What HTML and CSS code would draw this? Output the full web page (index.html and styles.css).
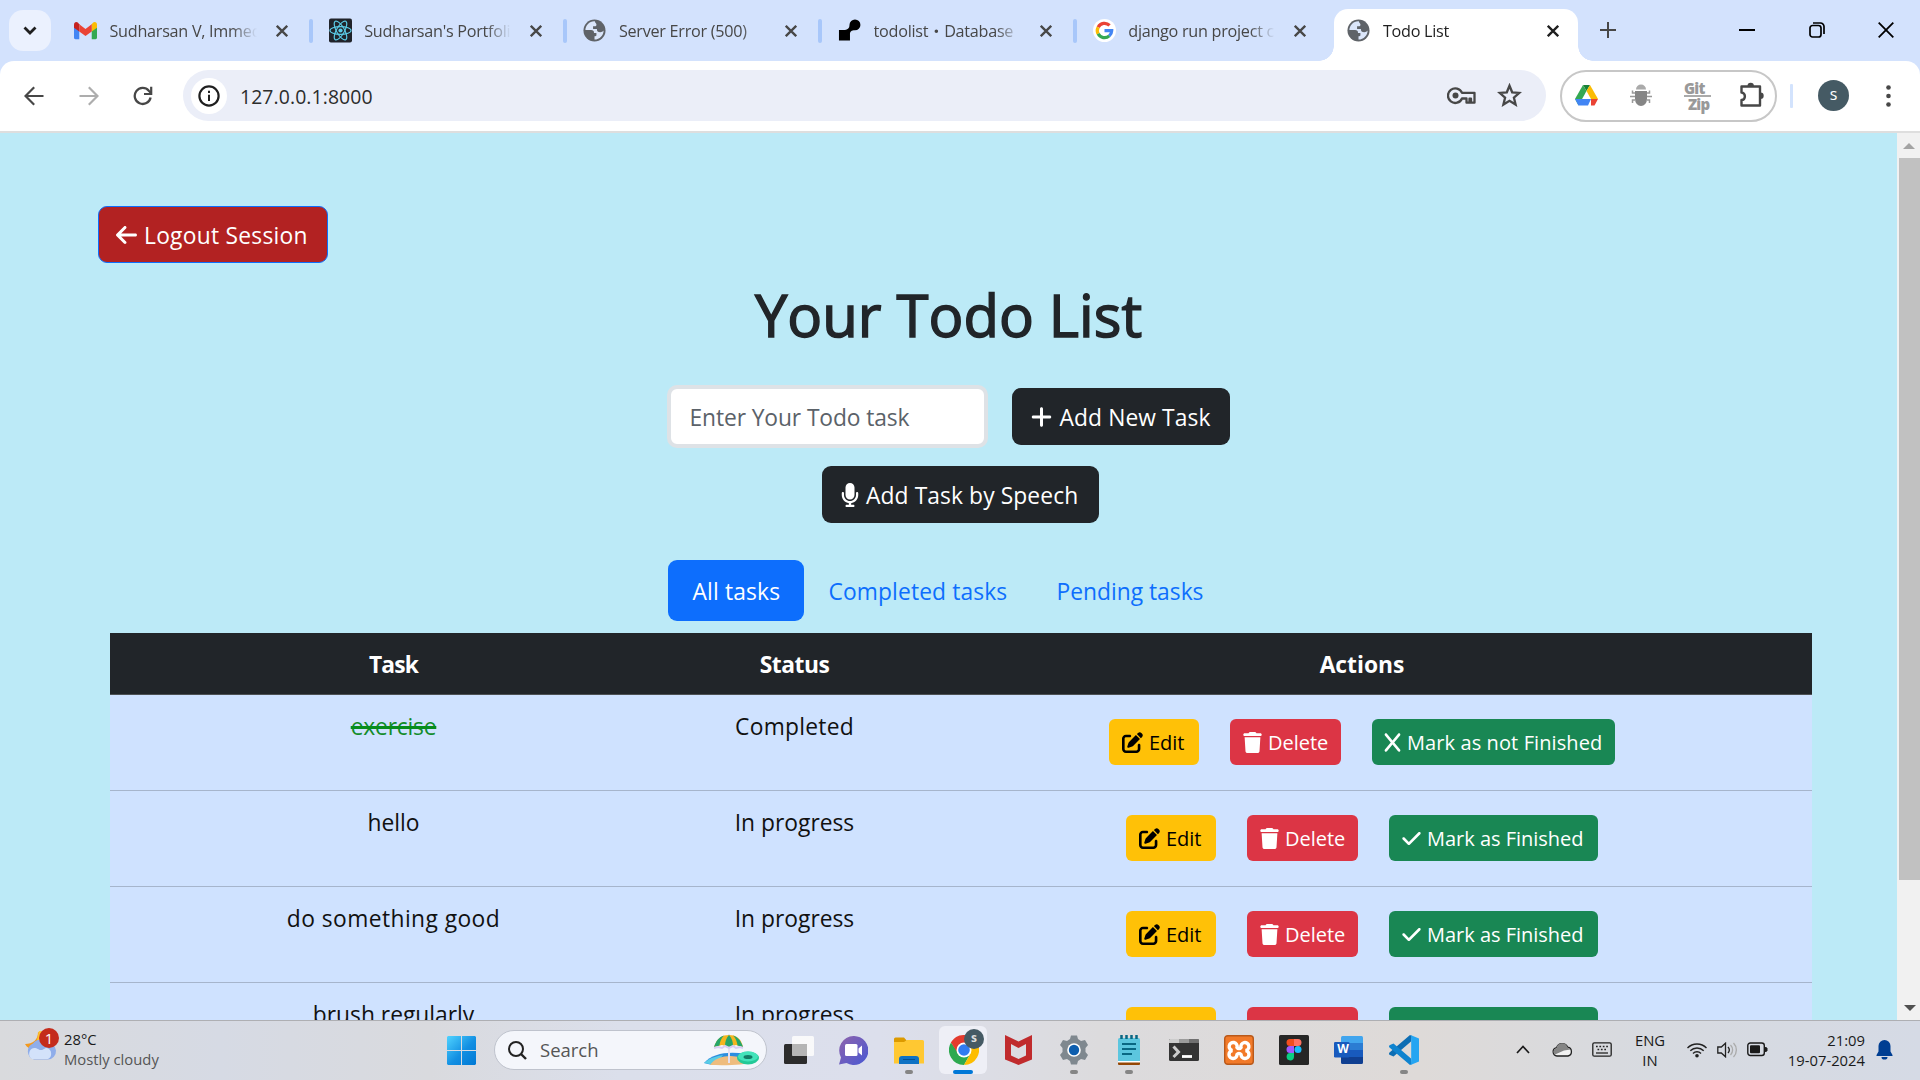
FILE: index.html
```html
<!DOCTYPE html>
<html lang="en">
<head>
<meta charset="utf-8">
<title>Todo List</title>
<link rel="stylesheet" href="styles.css">
</head>
<body>
<svg class="defs" aria-hidden="true">
  <symbol id="x" viewBox="0 0 12 12"><path d="M.8.8l10.400 10.400M11.200.8L.8 11.200" stroke="currentColor" stroke-width="2.300" fill="none"/></symbol>
  <symbol id="globe" viewBox="0 0 24 24"><circle cx="12" cy="12" r="11.500" fill="#5f6368"/><path d="M12.500 2.500C7 2 2.700 6.500 2.500 11.500h6c2 0 3 1 3 3h2.500v2.500c0 1-1 1-2 1v3.500c5.500 0 9.500-4.500 9.500-9.500-1 1-2 1.800-3.500 1.800-2.500 0-3.500-1-3.500-3.300h-4V7.500h2.500c1 0 1-1 1-2s-1.500-1.500-1.500-3z" fill="#dbe6fa"/></symbol>
  <symbol id="edit" viewBox="0 0 512 512"><path d="M471.600 21.700c-21.900-21.900-57.300-21.900-79.200 0L362.300 51.700l97.900 97.900 30.100-30.100c21.900-21.900 21.900-57.300 0-79.200L471.600 21.700zm-299.200 220c-6.100 6.100-10.800 13.600-13.500 21.900l-29.600 88.800c-2.900 8.600-.6 18.100 5.800 24.600s15.900 8.700 24.600 5.800l88.800-29.600c8.200-2.700 15.700-7.400 21.900-13.500L437.700 172.300 339.700 74.300 172.400 241.700zM96 64C43 64 0 107 0 160V416c0 53 43 96 96 96H352c53 0 96-43 96-96V320c0-17.700-14.300-32-32-32s-32 14.300-32 32v96c0 17.700-14.300 32-32 32H96c-17.700 0-32-14.300-32-32V160c0-17.700 14.300-32 32-32h96c17.700 0 32-14.300 32-32s-14.300-32-32-32H96z" fill="currentColor"/></symbol>
  <symbol id="trash" viewBox="0 0 448 512"><path d="M135.200 17.700L128 32H32C14.300 32 0 46.300 0 64S14.300 96 32 96H416c17.700 0 32-14.300 32-32s-14.300-32-32-32H320l-7.200-14.300C307.400 6.800 296.300 0 284.200 0H163.800c-12.100 0-23.200 6.800-28.600 17.700zM416 128H32L53.200 467c1.600 25.300 22.600 45 47.900 45H346.900c25.300 0 46.300-19.700 47.900-45L416 128z" fill="currentColor"/></symbol>
  <symbol id="check" viewBox="0 0 448 512"><path d="M438.600 105.400c12.500 12.500 12.500 32.800 0 45.300l-256 256c-12.500 12.500-32.800 12.500-45.300 0l-128-128c-12.500-12.500-12.500-32.800 0-45.300s32.800-12.500 45.300 0L160 338.700 393.400 105.400c12.500-12.500 32.800-12.500 45.300 0z" fill="currentColor"/></symbol>
  <symbol id="cross" viewBox="0 0 384 512"><path d="M376.600 84.500c11.300-13.600 9.500-33.800-4.100-45.100s-33.800-9.500-45.100 4.100L192 206 56.600 43.500C45.300 29.900 25.100 28.100 11.500 39.400S-3.900 70.900 7.400 84.500L150.300 256 7.400 427.500c-11.300 13.600-9.500 33.800 4.100 45.100s33.800 9.500 45.100-4.100L192 306 327.400 468.500c11.300 13.600 31.500 15.400 45.100 4.100s15.400-31.500 4.100-45.100L233.700 256 376.600 84.500z" fill="currentColor"/></symbol>
</svg>

<header class="tabstrip">
  <button class="tab-search"><svg width="14" height="10" viewBox="0 0 14 10"><path d="M1.500 1.500L7 7l5.500-5.500" fill="none" stroke="#1f1f1f" stroke-width="2.800"/></svg></button>
  <div class="tab">
    <svg class="fav" viewBox="0 0 24 24"><path d="M0 6v13.500c0 1 .7 1.500 1.500 1.500H5.500V9z" fill="#4285f4"/><path d="M18.500 9v12h4c.8 0 1.500-.6 1.500-1.500V6z" fill="#34a853"/><path d="M18.500 5.500V13L24 9V6c0-3-2.500-3.500-4-2.300z" fill="#fbbc04"/><path d="M0 6v3l5.500 4V5.500L4 3.700C2.500 2.500 0 3 0 6z" fill="#c5221f"/><path d="M5.500 5.500L12 10.400l6.500-4.900V13L12 17.800 5.500 13z" fill="#ea4335"/></svg>
    <span class="title">Sudharsan V, Immed</span><svg class="x"><use href="#x"/></svg>
  </div>
  <div class="tab">
    <svg class="fav" viewBox="0 0 24 25"><rect width="24" height="25" rx="2" fill="#20232a"/><g fill="none" stroke="#5bcbe6" stroke-width="1.200"><ellipse cx="12" cy="12.500" rx="11" ry="4.100"/><ellipse cx="12" cy="12.500" rx="11" ry="4.100" transform="rotate(60 12 12.500)"/><ellipse cx="12" cy="12.500" rx="11" ry="4.100" transform="rotate(120 12 12.500)"/></g><circle cx="12" cy="12.500" r="2.200" fill="#5bcbe6"/></svg>
    <span class="title">Sudharsan's Portfoli</span><svg class="x"><use href="#x"/></svg>
  </div>
  <div class="tab">
    <svg class="fav"><use href="#globe"/></svg>
    <span class="title">Server Error (500)</span><svg class="x"><use href="#x"/></svg>
  </div>
  <div class="tab">
    <svg class="fav" viewBox="0 0 24 24"><path d="M1 11.500h4.500C10 11.500 12 10 12 6a5.700 5.700 0 1 1 5.700 5.800C14 11.800 12.500 13 12.500 16v6.500H1z" fill="#000"/></svg>
    <span class="title">todolist・Database</span><svg class="x"><use href="#x"/></svg>
  </div>
  <div class="tab">
    <svg class="fav" viewBox="0 0 24 24"><circle cx="12" cy="12" r="12" fill="#fff"/><g fill="none" stroke-width="3.400"><path d="M17.300 6.700A7.500 7.500 0 0 0 5.400 8.500" stroke="#ea4335"/><path d="M5.400 8.500a7.500 7.500 0 0 0 0 7" stroke="#fbbc05"/><path d="M5.400 15.500a7.500 7.500 0 0 0 11.600 2.100" stroke="#34a853"/><path d="M12 12.200h7.500a7.500 7.500 0 0 1-2.500 5.400" stroke="#4285f4"/></g></svg>
    <span class="title">django run project c</span><svg class="x"><use href="#x"/></svg>
  </div>
  <div class="tab active">
    <svg class="fav"><use href="#globe"/></svg>
    <span class="title">Todo List</span><svg class="x"><use href="#x"/></svg>
  </div>
  <svg class="newtab" viewBox="0 0 16 16"><path d="M8 0v16M0 8h16" stroke="#474747" stroke-width="2"/></svg>
  <div class="winbtns">
    <svg width="16" height="16" viewBox="0 0 16 16"><path d="M0 8h16" stroke="#000" stroke-width="2"/></svg>
    <svg width="16" height="16" viewBox="0 0 16 16"><g fill="none" stroke="#000" stroke-width="1.700"><rect x="1" y="3.500" width="11" height="11.500" rx="2.500"/><path d="M4 1h7.500a3.500 3.500 0 0 1 3.500 3.500V12"/></g></svg>
    <svg width="16" height="16" viewBox="0 0 16 16"><path d="M.7.7l14.600 14.600M15.300.7L.7 15.300" stroke="#000" stroke-width="1.800"/></svg>
  </div>
</header>

<div class="toolbar">
  <nav class="navs">
    <svg width="20" height="20" viewBox="0 0 20 20"><path d="M19.500 10H2M10.200 1.300L1.500 10l8.700 8.700" fill="none" stroke="#474747" stroke-width="2.200"/></svg>
    <svg width="20" height="20" viewBox="0 0 20 20"><path d="M.5 10H18M9.800 1.300l8.700 8.700-8.700 8.700" fill="none" stroke="#adadad" stroke-width="2.200"/></svg>
    <svg width="20" height="20" viewBox="0 0 20 20"><path d="M17.600 11.500A8 8 0 1 1 15.800 4.700L18 7" fill="none" stroke="#474747" stroke-width="2.300"/><path d="M18.200.8V8H11" fill="none" stroke="#474747" stroke-width="2.200"/></svg>
  </nav>
  <div class="omnibox">
    <span class="info"><svg width="22" height="22" viewBox="0 0 22 22"><circle cx="11" cy="11" r="9.600" fill="none" stroke="#1f1f1f" stroke-width="2.200"/><path d="M11 9.700V16M11 5.700v2.300" stroke="#1f1f1f" stroke-width="2"/></svg></span>
    <span class="url">127.0.0.1:8000</span>
    <svg width="29" height="18" viewBox="0 0 29 18"><g fill="none" stroke="#474747" stroke-width="2.300"><path d="M15 5.800A7.300 7.300 0 1 0 15 11.500h4.500v4.200h3v-4h1.500v4H27.500V5.800z" stroke-linejoin="round"/></g><circle cx="8.500" cy="8.600" r="3" fill="#474747"/></svg>
    <svg class="star" width="25" height="24" viewBox="0 0 25 24"><path d="M12.500 2.700l2.700 6.600 7.100.6-5.400 4.700 1.700 7-6.100-3.800-6.100 3.800 1.700-7L2.700 9.900l7.100-.6z" fill="none" stroke="#474747" stroke-width="2.300"/></svg>
  </div>
  <div class="exts">
    <svg width="23" height="21" viewBox="0 0 23 21"><path d="M8 0h7l-3.500 6z" fill="#188038"/><path d="M8 0L0 14l3.500 6.500L11.500 6z" fill="#34a853"/><path d="M15 0l8 14h-7L11.500 6z" fill="#fbbc04"/><path d="M0 14h16l-3 6.500H3.500z" fill="#4285f4"/><path d="M16 14h7l-3.500 6.500H16z" fill="#ea4335"/></svg>
    <svg width="22" height="23" viewBox="0 0 22 23"><g fill="none" stroke="#999" stroke-width="1.500"><path d="M5 9H2.500V6.500M5 12.500H0M5 16H2.500v3M17 9h2.500V6.500M17 12.500h5M17 16h2.500v3"/></g><path d="M6 5.500a5 5 0 0 1 10 0z" fill="#aaa"/><path d="M5 7h12v8a6 7 0 0 1-12 0z" fill="#858585"/></svg>
    <span class="gitzip"><b>Git</b><i></i><b class="z">Zip</b></span>
    <svg width="26" height="26" viewBox="0 0 26 26"><path d="M2.500 4.500H21V23.500H2.500V18c4.500 0 4.500-7.500 0-7.500z" fill="none" stroke="#474747" stroke-width="2.400" stroke-linejoin="round"/><path d="M8.500 4a3.200 3.200 0 0 1 6.400 0zM21.500 10.500a3.200 3.200 0 0 1 0 6.400z" fill="#474747"/></svg>
  </div>
  <i class="tsep"></i>
  <span class="avatar">s</span>
  <svg class="dots" width="5" height="22" viewBox="0 0 5 22"><g fill="#474747"><circle cx="2.500" cy="2.500" r="2.300"/><circle cx="2.500" cy="11" r="2.300"/><circle cx="2.500" cy="19.500" r="2.300"/></g></svg>
</div>

<div class="viewport">
  <main class="page">
    <button class="btn logout"><svg width="21" height="24" viewBox="0 0 448 512"><path d="M9.400 233.400c-12.500 12.500-12.500 32.800 0 45.300l160 160c12.500 12.500 32.800 12.500 45.300 0s12.500-32.800 0-45.300L109.200 288 416 288c17.700 0 32-14.300 32-32s-14.300-32-32-32l-306.700 0L214.600 118.600c12.500-12.500 12.500-32.800 0-45.300s-32.800-12.500-45.300 0l-160 160z" fill="#fff"/></svg><span>Logout Session</span></button>
    <h1>Your Todo List</h1>
    <div class="form">
      <input type="text" placeholder="Enter Your Todo task">
      <button class="btn add"><svg width="21" height="24" viewBox="0 0 448 512"><path d="M256 80c0-17.700-14.300-32-32-32s-32 14.300-32 32V224H48c-17.700 0-32 14.300-32 32s14.300 32 32 32H192V432c0 17.700 14.300 32 32 32s32-14.300 32-32V288H400c17.700 0 32-14.300 32-32s-14.300-32-32-32H256V80z" fill="#fff"/></svg><span>Add New Task</span></button>
    </div>
    <button class="btn speech"><svg width="18" height="24" viewBox="0 0 384 512"><path d="M192 0C139 0 96 43 96 96V256c0 53 43 96 96 96s96-43 96-96V96c0-53-43-96-96-96zM64 216c0-13.300-10.700-24-24-24s-24 10.700-24 24v40c0 89.100 66.200 162.700 152 174.400V464H120c-13.300 0-24 10.700-24 24s10.700 24 24 24h72 72c13.300 0 24-10.700 24-24s-10.700-24-24-24H216V430.400c85.800-11.700 152-85.300 152-174.400V216c0-13.300-10.700-24-24-24s-24 10.700-24 24v40c0 70.700-57.300 128-128 128s-128-57.300-128-128V216z" fill="#fff"/></svg><span>Add Task by Speech</span></button>
    <nav class="pills"><a class="on">All tasks</a><a class="completed">Completed tasks</a><a class="pending">Pending tasks</a></nav>
    <table>
      <thead><tr><th class="c1">Task</th><th class="c2">Status</th><th class="c3">Actions</th></tr></thead>
      <tbody>
        <tr><td><s>exercise</s></td><td class="wide">Completed</td><td><div class="acts"><button class="sm edit"><svg><use href="#edit"/></svg>Edit</button><button class="sm del"><svg><use href="#trash"/></svg>Delete</button><button class="sm undo"><svg><use href="#cross"/></svg>Mark as not Finished</button></div></td></tr>
        <tr><td>hello</td><td>In progress</td><td><div class="acts"><button class="sm edit"><svg><use href="#edit"/></svg>Edit</button><button class="sm del"><svg><use href="#trash"/></svg>Delete</button><button class="sm done"><svg><use href="#check"/></svg>Mark as Finished</button></div></td></tr>
        <tr><td class="wider">do something good</td><td>In progress</td><td><div class="acts"><button class="sm edit"><svg><use href="#edit"/></svg>Edit</button><button class="sm del"><svg><use href="#trash"/></svg>Delete</button><button class="sm done"><svg><use href="#check"/></svg>Mark as Finished</button></div></td></tr>
        <tr><td>brush regularly</td><td>In progress</td><td><div class="acts"><button class="sm edit"><svg><use href="#edit"/></svg>Edit</button><button class="sm del"><svg><use href="#trash"/></svg>Delete</button><button class="sm done"><svg><use href="#check"/></svg>Mark as Finished</button></div></td></tr>
      </tbody>
    </table>
  </main>
  <div class="scrollbar">
    <svg width="12" height="6" viewBox="0 0 12 6"><path d="M0 6l6-6 6 6z" fill="#a3a3a3"/></svg>
    <i class="thumb"></i>
    <svg class="down" width="12" height="6" viewBox="0 0 12 6"><path d="M0 0l6 6 6-6z" fill="#505050"/></svg>
  </div>
</div>

<footer class="taskbar">
  <div class="weather">
    <svg width="36" height="38" viewBox="0 0 36 38"><path d="M13 6c0 8-5 12-13 12 2 4 6 6 11 5l8-10-4-6z" fill="#f39a1f"/><path d="M14 5l-2 9 9 4V6z" fill="#ffc42e"/><path d="M9 33.500a8.500 8.500 0 0 1-1-16 9 9 0 0 1 14-1 8.500 8.500 0 0 1 1 17z" fill="#8fadea"/><path d="M7 33a6 6 0 0 1 2-11c4 0 4 2 7 2s3-2 6-2a6 6 0 0 1 1 11z" fill="#d3e2fa"/></svg>
    <b>1</b>
    <div><span>28°C</span><span class="muted">Mostly cloudy</span></div>
  </div>
  <div class="apps">
    <span class="app start"><svg width="29" height="29" viewBox="0 0 29 29"><defs><linearGradient id="win" x1="0" y1="0" x2="29" y2="29" gradientUnits="userSpaceOnUse"><stop stop-color="#50d3ff"/><stop offset=".55" stop-color="#128fe2"/><stop offset="1" stop-color="#0078d4"/></linearGradient></defs><path d="M1 0h13v14H0V1zM15 0h13l1 1v13H15zM0 15h14v14H1l-1-1zM15 15h14v13l-1 1H15z" fill="url(#win)"/></svg></span>
    <label class="search"><svg width="19" height="19" viewBox="0 0 19 19"><circle cx="8" cy="8" r="7" fill="none" stroke="#222" stroke-width="2"/><path d="M13 13l5 5" stroke="#222" stroke-width="2.400"/></svg><span>Search</span>
      <svg class="beach" width="56" height="32" viewBox="0 0 56 32"><path d="M0 29C9 19 25 17 42 20l6 8-40 3z" fill="#2c8ee0"/><path d="M0 29c7-6 14-7 19-8l-8 10z" fill="#59cce5"/><path d="M6 31c7-11 28-12 41-3-4 3-23 3.500-41 3z" fill="#eebc7e"/><path d="M25 0v29" stroke="#e5e0f2" stroke-width="2"/><path d="M10 13C13 4 18 1 25 1s12 3 14 12l-7-2-7 2-7-2z" fill="#f5b51e"/><path d="M10 13c2-6 5-10 10-11.500-3 3-4 6-4.500 10zM21 12c0-4 1-8 4-11 3 3 4 7 4 11l-4 1zM39 13c-2-6-5-10-10-11.500 3 3 4 6 4.500 10z" fill="#25a66a"/><path d="M10 14l4-1 4 1 3-2 4 2 4-2 3 2 4-1 3 1" stroke="#d9cdf3" stroke-width="2" fill="none"/><ellipse cx="44" cy="24" rx="11" ry="6.500" fill="#23c997"/><ellipse cx="44" cy="22.500" rx="10" ry="5" fill="#43e3ba"/><ellipse cx="44" cy="23" rx="4.500" ry="2" fill="#137d66"/></svg></label>
    <span class="app tv"><svg width="30" height="28" viewBox="0 0 30 28"><rect y="8" width="23" height="20" rx="1.500" fill="#2c2c2c"/><rect x="8" width="22" height="20" rx="1.500" fill="#fbfbfb" fill-opacity=".92"/><path d="M8 8h15v12H9.500L8 18.500z" fill="#b5b5b5"/></svg></span>
    <span class="app"><svg width="29" height="29" viewBox="0 0 29 29"><defs><linearGradient id="ch" x1="0" y1="0" x2="1" y2="1"><stop stop-color="#8f63ab"/><stop offset="1" stop-color="#4858d4"/></linearGradient></defs><path d="M14.500 0a14.500 14.500 0 1 1-7 27L0 28.500l2-7A14.500 14.500 0 0 1 14.500 0z" fill="url(#ch)"/><rect x="6" y="8" width="12.500" height="12" rx="1.500" fill="#fff"/><path d="M19.500 12.500L23 9.500v10l-3.500-3z" fill="#fff"/></svg></span>
    <span class="app run"><svg width="30" height="27" viewBox="0 0 30 27"><path d="M0 2a1.500 1.500 0 0 1 1.500-1.500H10L13 4l-3 3H0z" fill="#dc9a00"/><path d="M0 5h10l3-2h15.500A1.500 1.500 0 0 1 30 4.500V26.500H0z" fill="#ffc832"/><path d="M5 27v-5a3 3 0 0 1 3-3h14a3 3 0 0 1 3 3v5z" fill="#0f72c4"/><path d="M9 22.500h12" stroke="#064f91"/></svg></span>
    <span class="app run current"><svg width="30" height="30" viewBox="0 0 30 30"><path d="M15 15L2 7.500A15 15 0 0 1 28 7.500z" fill="#e33b2e"/><path d="M2 7.500A15 15 0 0 0 15 30l6.500-11.500-13-2z" fill="#2da94f"/><path d="M28 7.500A15 15 0 0 1 15 30l6.500-11.500V7.500z" fill="#fdbd00"/><path d="M2 7.500L9 18.500 15 8h13L26 5H4z" fill="#e33b2e"/><circle cx="15" cy="15" r="7.500" fill="#fff"/><circle cx="15" cy="15" r="5.800" fill="#317bf0"/></svg><b>s</b></span>
    <span class="app"><svg width="27" height="30" viewBox="0 0 27 30"><path d="M0 0l13.500 6.500L27 0v24.500L13.500 30 0 24.500zM6 9v11.500l7.500 3.500 7.500-3.500V9l-7.500 4z" fill="#c02b2d" fill-rule="evenodd"/></svg></span>
    <span class="app run"><svg width="30" height="30" viewBox="0 0 30 30"><path d="M11 4l1-3.500h6L19 4l3 2 4-1 3 5-2.500 3v4L29 20l-3 5-4-1-3 2-1 3.500h-6L11 26l-3-2-4 1-3-5 2.500-3v-4L1 10l3-5 4 1z" fill="#7f888f"/><circle cx="15" cy="15" r="6.800" fill="#fff"/><circle cx="15" cy="15" r="5.200" fill="#0d5eae"/></svg></span>
    <span class="app run"><svg width="22" height="30" viewBox="0 0 22 30"><rect y="3" width="22" height="24" rx="1.500" fill="#5cc6df"/><path d="M0 26h22v3a1 1 0 0 1-1 1H1a1 1 0 0 1-1-1z" fill="#944705"/><path d="M0 26h22v1.500H0z" fill="#fff"/><path d="M4 9h14M4 14h14M4 19h10" stroke="#096783" stroke-width="1.900"/><path d="M3.500 0v4M8.500 0v4M13.500 0v4M18.500 0v4" stroke="#096783" stroke-width="2.500"/></svg></span>
    <span class="app"><svg width="30" height="22" viewBox="0 0 30 22"><rect width="30" height="22" rx="1.500" fill="#343434"/><path d="M1 0h9v4H0V1z" fill="#ccc"/><path d="M10 0h10v4H10z" fill="#9b9b9b"/><path d="M20 0h9l1 1v3H20z" fill="#707070"/><path d="M4.500 7.500L9.500 13l-5 5" stroke="#ccc" stroke-width="3" fill="none"/><path d="M13 17.500h10" stroke="#fff" stroke-width="2.800"/></svg></span>
    <span class="app"><svg width="30" height="30" viewBox="0 0 30 30"><rect x=".7" y=".7" width="28.600" height="28.600" rx="3" fill="#f27a29" stroke="#b9591a" stroke-width="1.400"/><path d="M10 7.500a4 4 0 0 1 3 5c1 1.500 3 1.500 4 0a4 4 0 1 1 4.500 3 4 4 0 1 1-4.500 4c-1-1.500-3-1.500-4 0a4 4 0 1 1-4.500-4 4 4 0 0 1 1.500-8z" fill="none" stroke="#fff" stroke-width="3.400"/></svg></span>
    <span class="app"><svg width="30" height="30" viewBox="0 0 30 30"><rect width="30" height="30" rx="1.500" fill="#262626"/><path d="M15 4h-4a3.500 3.500 0 0 0 0 7h4z" fill="#f24e1e"/><path d="M15 4h4a3.500 3.500 0 0 1 0 7h-4z" fill="#ff7262"/><path d="M15 11h-4a3.500 3.500 0 0 0 0 7h4z" fill="#a259ff"/><circle cx="19" cy="14.500" r="3.500" fill="#1abcfe"/><path d="M15 18h-4a3.700 3.700 0 1 0 4 4z" fill="#0acf83"/></svg></span>
    <span class="app word"><svg width="29" height="28" viewBox="0 0 29 28"><path d="M7 1.500A1.500 1.500 0 0 1 8.500 0h19A1.500 1.500 0 0 1 29 1.500V7H7z" fill="#41a5ee"/><path d="M7 7h22v7H7z" fill="#2b7cd3"/><path d="M7 14h22v7H7z" fill="#185abd"/><path d="M7 21h22v5.500a1.500 1.500 0 0 1-1.500 1.500h-19A1.500 1.500 0 0 1 7 26.500z" fill="#103f91"/><rect y="6" width="15.500" height="15.500" rx="1.300" fill="#185abd"/></svg><em>W</em></span>
    <span class="app run"><svg width="30" height="30" viewBox="0 0 30 30"><path d="M22 6.500L4.500 21.500 1 20a1.500 1.500 0 0 1-.5-2.500L21 0l2 1z" fill="#0d6db3"/><path d="M22 23.500L4.500 8.500 1 10a1.500 1.500 0 0 0-.5 2.500L21 30l2-1z" fill="#0f83cf"/><path d="M21.500 0L30 3.500v23L21.500 30c.5-.5.700-1 .7-2V2c0-1-.2-1.500-.7-2z" fill="#25a5f2"/></svg></span>
  </div>
  <div class="tray">
    <svg class="chev" width="14" height="9" viewBox="0 0 14 9"><path d="M1 8l6-6.500L13 8" fill="none" stroke="#1a1a1a" stroke-width="1.700"/></svg>
    <svg class="cloud" width="21" height="15" viewBox="0 0 21 15"><path d="M5 14a4.200 4.200 0 0 1-.5-8.300 6 6 0 0 1 11.200-.5A4.500 4.500 0 0 1 16 14z" fill="#f2f2f2" stroke="#222" stroke-width="1.300"/><path d="M4.500 6.200A5.600 5.600 0 0 1 15.500 5.500l3 2L12 8.500 3 12.500C0 10 2 7 4.500 6.200z" fill="#858585"/></svg>
    <svg class="kb" width="20" height="15" viewBox="0 0 20 15"><rect x=".8" y=".8" width="18.400" height="13.400" rx="1.500" fill="none" stroke="#222" stroke-width="1.300"/><path d="M4 4.500h13M5.500 7.500h10" stroke="#222" stroke-width="1.700" stroke-dasharray="1.700 1.700"/><path d="M4 11h12" stroke="#222" stroke-width="1.300"/></svg>
    <span class="lang">ENG<br>IN</span>
    <svg class="wifi" width="20" height="16" viewBox="0 0 20 16"><g fill="none" stroke="#222" stroke-width="1.400"><path d="M.5 6a13.300 13.300 0 0 1 19 0M3.300 8.700a9.500 9.500 0 0 1 13.400 0M6 11.500a5.600 5.600 0 0 1 8 0"/></g><circle cx="10" cy="13.700" r="1.800" fill="#222"/></svg>
    <svg class="vol" width="21" height="16" viewBox="0 0 21 16"><path d="M.8 5h3.500L8.500 1.200v13.600L4.300 11H.8z" fill="none" stroke="#222" stroke-width="1.300"/><path d="M11 5a4.500 4.500 0 0 1 0 6" fill="none" stroke="#222" stroke-width="1.300"/><path d="M13.500 3a7 7 0 0 1 0 10M16.500 1a10 10 0 0 1 0 14" fill="none" stroke="#aaa" stroke-width="1.300"/></svg>
    <svg class="bat" width="21" height="15" viewBox="0 0 21 15"><rect x=".8" y="1" width="16.500" height="12.500" rx="2.500" fill="none" stroke="#1a1a1a" stroke-width="1.400"/><rect x="3" y="3.300" width="10" height="8" rx="1" fill="#1a1a1a"/><path d="M18 5.500l2 .5v3l-2 .5z" fill="#1a1a1a" stroke="#1a1a1a"/></svg>
    <span class="clock">21:09<br>19-07-2024</span>
    <svg class="bell" width="17" height="20" viewBox="0 0 17 20"><path d="M8.500 0a6 6 0 0 1 6 6v5.500l2 3.500v1H.5v-1l2-3.500V6a6 6 0 0 1 6-6zM5.500 17h6a3 2.600 0 0 1-6 0z" fill="#003e92"/></svg>
  </div>
</footer>
</body>
</html>
```
FILE: styles.css
```css
* { box-sizing: border-box; }
body {
  margin: 0; width: 1920px; height: 1080px; overflow: hidden;
  display: flex; flex-direction: column; background: #d3e2fd;
  font-family: "Open Sans", "Noto Sans", "Noto Sans CJK JP", sans-serif; color: #212529;
}
button { font-family: inherit; border: 0; padding: 0; margin: 0; display: flex; align-items: center; }
svg { display: block; flex: none; }
.defs { position: absolute; width: 0; height: 0; }

/* tab strip */
.tabstrip { height: 61px; flex: none; display: flex; align-items: flex-start; padding-left: 9px; }
.tab-search { width: 42px; height: 41px; margin: 10px 6px 0 0; border-radius: 14px; background: #ebf1fe; justify-content: center; }
.tab { width: 254.700px; height: 61px; display: flex; align-items: center; padding-left: 17px; color: #474747; position: relative; flex: none; }
.tab::after { content: ""; position: absolute; right: -1px; top: 19px; width: 4px; height: 24px; border-radius: 2px; background: #a8c7fa; }
.fav { width: 23px; height: 25px; margin-right: 12.500px; }
.title { width: 147px; height: 26px; line-height: 26px; font-size: 16.200px; letter-spacing: -.27px; white-space: nowrap; overflow: hidden; -webkit-mask-image: linear-gradient(90deg, #000 122px, transparent 147px); }
.x { width: 12px; height: 12px; margin-left: 19px; }
.tab:nth-of-type(5)::after { display: none; }
.tab.active { width: 244px; height: 52px; margin: 9px 0 0 4px; padding: 0 0 9px 13px; background: #fff; border-radius: 14px 14px 0 0; color: #1f1f1f; }
.active .x { margin-left: 17px; }
.tab.active::before, .tab.active::after { content: ""; display: block; position: absolute; top: auto; bottom: 0; width: 15px; height: 15px; border-radius: 0; }
.tab.active::before { left: -15px; background: radial-gradient(circle at 0 0, transparent 14.500px, #fff 15px); }
.tab.active::after { right: -15px; background: radial-gradient(circle at 100% 0, transparent 14.500px, #fff 15px); }
.newtab { width: 16px; height: 16px; margin: 22px 0 0 22px; }
.winbtns { margin: 22px 26px 0 auto; display: flex; gap: 53.500px; }

/* toolbar */
.toolbar { height: 72px; flex: none; background: #fff; border-radius: 14px 14px 0 0; border-bottom: 2px solid #dedede; padding: 9px 0 10px 24px; display: flex; align-items: center; }
.navs { display: flex; gap: 34.500px; width: 159px; }
.omnibox { width: 1363px; height: 51px; border-radius: 26px; background: #ebeef8; display: flex; align-items: center; padding-left: 8px; }
.info { width: 36px; height: 36px; border-radius: 50%; background: #fff; display: grid; place-items: center; }
.url { margin-left: 13px; width: 1207px; font-size: 19.400px; letter-spacing: .1px; padding-top: 2px; color: #2c2c2c; }
.star { margin-left: 21px; margin-top: -2px; }
.exts { width: 217px; height: 52px; margin-left: 14px; border: 2px solid #c7c7c7; border-radius: 26px; display: flex; align-items: center; padding-left: 13px; }
.exts svg:nth-of-type(2) { margin-left: 32px; }
.exts svg:last-child { margin-left: 28px; margin-top: -1px; }
.gitzip { margin-left: 32px; width: 27px; height: 28px; display: flex; flex-direction: column; font-size: 15px; line-height: 12px; color: #999; }
.gitzip b { font-weight: 800; letter-spacing: -.8px; }
.gitzip .z { margin-left: 4px; }
.gitzip i { height: 2px; margin: 1px 0; background: #aaa; flex: none; }
.tsep { width: 3px; height: 24px; background: #d3e3fd; margin-left: 13px; border-radius: 1px; }
.avatar { width: 31px; height: 31px; border-radius: 50%; background: #455a64; color: #fff; margin-left: 25px; font-size: 16px; line-height: 29px; text-align: center; }
.dots { margin-left: 37px; }

/* page */
.viewport { height: 887px; flex: none; display: flex; overflow: hidden; }
.page { width: 1897px; background: #bceaf7; display: flex; flex-direction: column; align-items: center; flex: none; }
.btn { height: 57px; font-size: 22.800px; border-radius: 9px; color: #fff; background: #212529; white-space: nowrap; flex: none; letter-spacing: .1px; }
.btn svg { margin-right: 7px; }
.btn span { padding-top: 2px; }
.logout { align-self: flex-start; width: 230px; margin: 73px 0 0 98px; padding: 0 0 0 17px; background: #b22222; border: 1.500px solid #0d6efd; letter-spacing: .25px; }
h1 { margin: 16px 0 0; font-size: 58px; line-height: 72px; font-weight: 400; -webkit-text-stroke: 1.500px #212529; white-space: nowrap; flex: none; }
.form { margin: 34px 0 0 -1px; display: flex; align-items: center; gap: 24px; flex: none; }
.form input { width: 321px; height: 63px; border: 4px solid #dee2e6; border-radius: 10px; padding: 2px 0 0 19px; font: 22.800px "Open Sans", sans-serif; letter-spacing: -.1px; background: #fff; }
.form input::placeholder { color: #5b6269; opacity: 1; }
.add { width: 218px; padding-left: 19px; }
.add svg { margin-right: 8px; }
.speech { width: 277px; margin: 18px 0 0 24px; padding-left: 19px; }
.pills { align-self: flex-start; margin: 37px 0 0 668px; display: flex; font-size: 22.800px; line-height: 63px; height: 61px; color: #0d6efd; white-space: nowrap; flex: none; }
.pills a { padding-left: 24.500px; }
.pills .on { width: 136px; background: #0d6efd; color: #fff; border-radius: 9px; letter-spacing: .15px; }
.completed { width: 228px; letter-spacing: .12px; }
table { width: 1702px; margin: 12px 0 0 25px; border-collapse: separate; border-spacing: 0; table-layout: fixed; font-size: 22.800px; flex: none; }
th { height: 62px; padding: 2px 0 0; background: #212529; color: #fff; font-weight: 700; letter-spacing: -.5px; border-bottom: 1px solid #4d5154; }
.c1 { width: 567px; letter-spacing: -.8px; }
.c2 { width: 235px; }
.c3 { letter-spacing: 0; }
td { height: 96px; padding: 14px 0 0; line-height: 36px; vertical-align: top; text-align: center; background: #cfe2ff; color: #111; border-bottom: 1px solid #a6b5cc; }
.wide { letter-spacing: .25px; }
.wider { letter-spacing: .43px; }
s { color: #128c2a; letter-spacing: -.2px; text-decoration-thickness: 3px; text-decoration-color: #078d1c; }
.acts { display: flex; justify-content: center; gap: 31px; margin-top: 10px; }
.sm { height: 46px; font-size: 20px; border-radius: 6px; white-space: nowrap; color: #fff; padding: 1px 0 0 13px; letter-spacing: -.02px; }
.sm svg { height: 21px; margin-right: 6px; }
.edit { width: 90px; background: #ffc107; color: #000; }
.edit svg { width: 21px; }
.del { width: 111px; background: #dc3545; }
.del svg { width: 19px; }
.done, .undo { width: 209px; background: #198754; }
.done svg { width: 19px; }
.undo { width: 243px; padding-left: 12px; letter-spacing: .1px; }
.undo svg { width: 17px; }
.scrollbar { width: 23px; background: #f1f1f1; display: flex; flex-direction: column; align-items: center; padding-top: 10px; flex: none; }
.thumb { width: 21px; height: 722px; margin: 9px 0 0 2px; background: #c1c1c1; flex: none; }
.scrollbar .down { margin: 125px 0 0 2px; }

/* taskbar */
.taskbar { height: 60px; flex: none; border-top: 1px solid #aeafb3; display: flex; background: linear-gradient(90deg, #d9dadd 0, #d6dae4 220px, #d9dade 430px, #dbdfeb 620px, #dcdfec 880px, #dcdbdd 1100px, #dedad8 1420px, #d7dae0 1650px, #d5dae5 1920px); font-size: 14.800px; line-height: 20px; color: #1a1a1a; }
.weather { width: 434px; display: flex; padding: 5px 0 0 25px; position: relative; }
.weather b { position: absolute; left: 39px; top: 7px; width: 20px; height: 20px; border-radius: 50%; background: #c42b1c; color: #fff; font-weight: 400; text-align: center; }
.weather div { margin: 3px 0 0 3px; }
.weather span { display: block; }
.muted { color: #555; }
.apps { display: flex; align-items: flex-start; width: 1077px; }
.app { width: 55px; height: 58px; display: flex; align-items: center; justify-content: center; position: relative; flex: none; }
.search { width: 273px; height: 40px; margin: 9px 4px 0 5px; border: 1px solid #bfc3cd; border-radius: 20px; background: #f4f6fb; display: flex; align-items: center; padding-left: 13px; font-size: 18.500px; color: #555; flex: none; }
.search span { margin-left: 13px; width: 164px; }
.run::after { content: ""; position: absolute; left: 24px; bottom: 5px; width: 8px; height: 4px; border-radius: 2px; background: #858585; }
.current::before { content: ""; position: absolute; left: 3px; top: 5px; width: 48px; height: 48px; border-radius: 6px; background: #eeeff6; }
.current svg { position: relative; }
.current::after { left: 17px; width: 20px; background: #0078d7; }
.current b { position: absolute; left: 28px; top: 8px; width: 20px; height: 20px; border-radius: 50%; background: #455a64; color: #ddd; font-size: 12px; line-height: 18px; text-align: center; }
.word em { position: absolute; left: 14px; top: 18px; width: 16px; font: 700 12px/20px "Open Sans", sans-serif; color: #fff; text-align: center; }
.tray { display: flex; align-items: center; padding: 0 0 2px 5px; }
.cloud { margin-left: 22px; }
.kb { margin-left: 19px; }
.lang { width: 40px; margin-left: 18px; text-align: center; }
.wifi { margin-left: 17px; }
.vol { margin-left: 10px; }
.bat { margin-left: 9px; }
.clock { width: 88px; margin-left: 9px; text-align: right; }
.bell { margin-left: 11px; }
```
